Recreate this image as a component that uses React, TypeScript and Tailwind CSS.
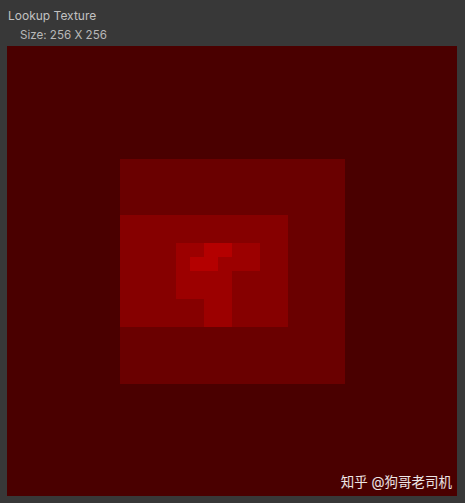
const cells: [number, number, number, number, string][] = [
  [0, 0, 32, 32, "#4a0000"],
  [8, 8, 16, 16, "#6a0000"],
  [8, 12, 12, 8, "#860000"],
  [12, 14, 6, 2, "#9c0000"],
  [12, 16, 4, 2, "#9c0000"],
  [14, 18, 2, 2, "#9c0000"],
  [14, 14, 2, 1, "#b40000"],
  [13, 15, 2, 1, "#b40000"],
]

function LookupTexture() {
  return (
    <svg
      viewBox="0 0 32 32"
      width={450}
      height={450}
      shapeRendering="crispEdges"
      className="block"
    >
      {cells.map(([x, y, w, h, c], i) => (
        <rect key={i} x={x} y={y} width={w} height={h} fill={c} />
      ))}
    </svg>
  )
}

export default function App() {
  return (
    <div
      className="w-[465px] h-[503px] bg-[#383838] overflow-hidden"
      style={{ fontFamily: "Inter, 'Noto Sans CJK SC', sans-serif" }}
    >
      <div className="pl-2 pt-[7px] text-[12px] leading-[18px] text-[#c2c2c2]">Lookup Texture</div>
      <div className="pl-5 pt-[1px] text-[11.6px] leading-[18px] text-[#b8b8b8]">Size: 256 X 256</div>
      <div className="relative ml-[7px] mt-[2px] w-[450px] h-[450px]">
        <LookupTexture />
        <span className="absolute right-[5px] bottom-[4px] text-[13.5px] leading-[20px] text-white/90">
          知乎 @狗哥老司机
        </span>
      </div>
    </div>
  )
}
